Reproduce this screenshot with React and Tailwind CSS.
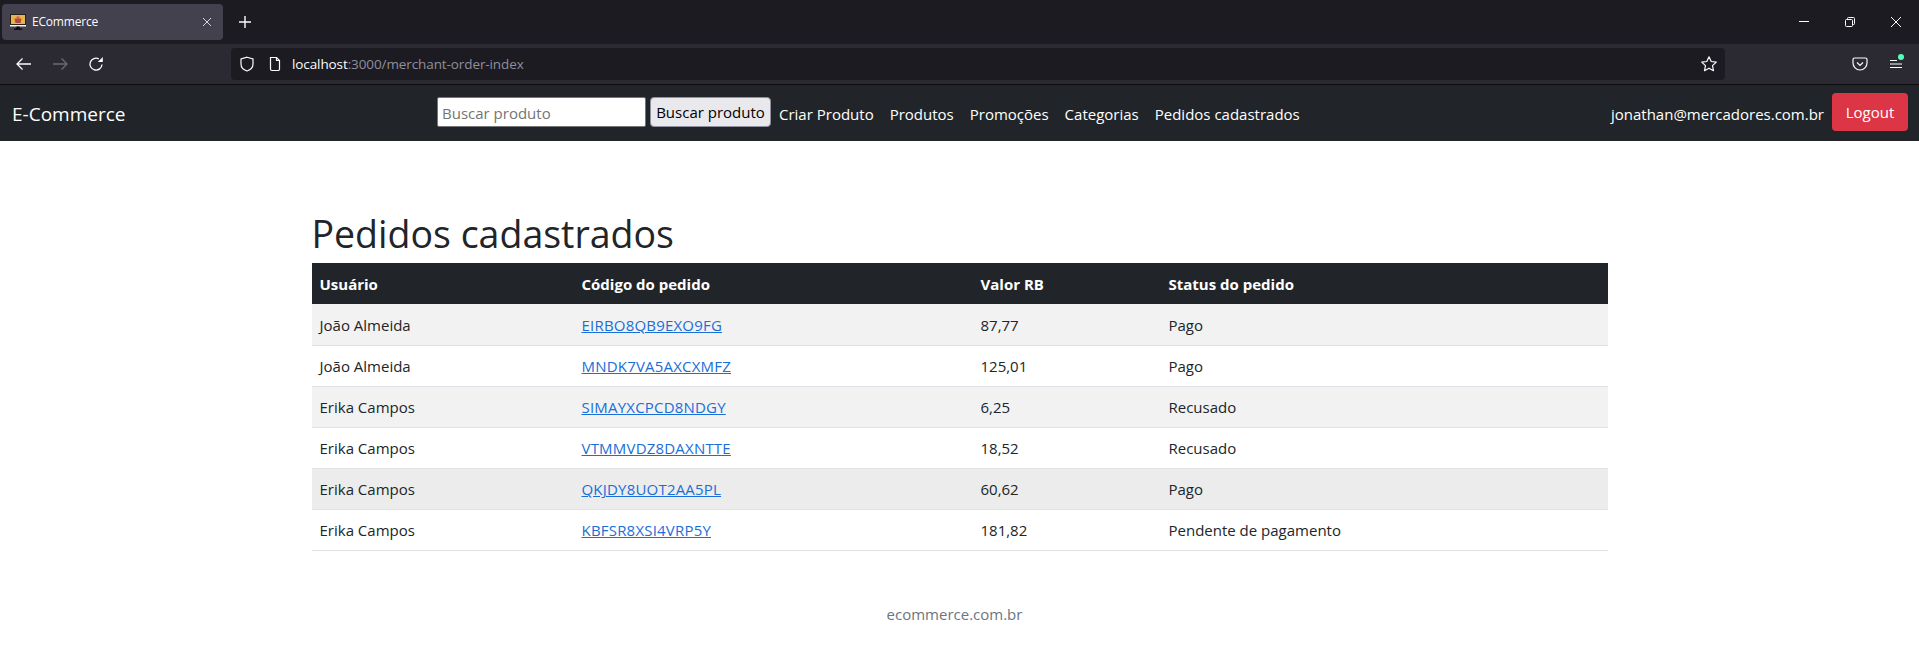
import React from "react";

function Arrow({ dim }) {
  return (
    <svg width="16" height="16" viewBox="0 0 16 16" fill="none" stroke={dim ? "#6b6b74" : "#fbfbfe"} strokeWidth="1.3">
      {dim ? <path d="M1 8H15M9.5 2.5L15 8L9.5 13.5" /> : <path d="M15 8H1M6.5 2.5L1 8L6.5 13.5" />}
    </svg>
  );
}

const rows = [
  ["João Almeida", "EIRBO8QB9EXO9FG", "87,77", "Pago", "bg-[#f2f2f2]"],
  ["João Almeida", "MNDK7VA5AXCXMFZ", "125,01", "Pago", "bg-white"],
  ["Erika Campos", "SIMAYXCPCD8NDGY", "6,25", "Recusado", "bg-[#f2f2f2]"],
  ["Erika Campos", "VTMMVDZ8DAXNTTE", "18,52", "Recusado", "bg-white"],
  ["Erika Campos", "QKJDY8UOT2AA5PL", "60,62", "Pago", "bg-[#ececec]"],
  ["Erika Campos", "KBFSR8XSI4VRP5Y", "181,82", "Pendente de pagamento", "bg-white"],
];

export default function App() {
  return (
    <div className="w-[1919px] h-[651px] overflow-hidden bg-white font-['Open_Sans',sans-serif] text-[#212529]">
      {/* Tab strip */}
      <div className="h-[44px] bg-[#1c1b22] flex items-start pt-[4px] pl-[2px] text-[#fbfbfe]">
        <div className="w-[221px] h-[36px] rounded-[4px] bg-[#42414d] flex items-center pl-[8px] pr-[10px]">
          <svg width="16" height="16" viewBox="0 0 16 16" className="shrink-0">
            <rect x="0.5" y="0.5" width="15" height="10" fill="#e9b44c" stroke="#2c2118" />
            <path d="M4.5 4.5H11.5L10.5 9H5.5Z" fill="#b5483f" />
            <rect x="6.5" y="2.5" width="3" height="2" fill="#c9605a" />
            <rect x="0" y="11" width="16" height="1.5" fill="#f5f5f5" />
            <path d="M6.5 12.5H9.5L10 14.5H12V16H4V14.5H6Z" fill="#111" />
          </svg>
          <span className="ml-[6px] text-[12px] flex-1 tracking-[-0.2px]">ECommerce</span>
          <svg width="12" height="12" viewBox="0 0 12 12" stroke="#d5d5da" strokeWidth="1"><path d="M2 2L10 10M10 2L2 10" /></svg>
        </div>
        <svg className="ml-[15px] mt-[11px]" width="14" height="14" viewBox="0 0 14 14" stroke="#fbfbfe" strokeWidth="1.4"><path d="M7 1V13M1 7H13" /></svg>
        <div className="ml-auto flex items-center h-[36px]">
          <div className="w-[46px] flex justify-center"><svg width="12" height="12" viewBox="0 0 12 12" stroke="#fbfbfe"><path d="M1 5.5H11" /></svg></div>
          <div className="w-[46px] flex justify-center"><svg width="12" height="12" viewBox="0 0 12 12" fill="none" stroke="#fbfbfe"><rect x="1.5" y="3.5" width="7" height="7" rx="1" /><path d="M3.5 3.5V2.5A1 1 0 0 1 4.5 1.5H9.5A1 1 0 0 1 10.5 2.5V7.5A1 1 0 0 1 9.5 8.5H8.5" /></svg></div>
          <div className="w-[46px] flex justify-center"><svg width="12" height="12" viewBox="0 0 12 12" stroke="#fbfbfe"><path d="M1 1L11 11M11 1L1 11" /></svg></div>
        </div>
      </div>
      {/* Toolbar */}
      <div className="h-[41px] bg-[#2b2a33] flex items-start pt-[4px] border-b border-b-[#0c0c0f]">
        <div className="w-[231px] h-[32px] flex items-center pl-[16px] gap-[20px] shrink-0">
          <Arrow />
          <Arrow dim />
          <svg width="16" height="16" viewBox="0 0 16 16" fill="none" stroke="#fbfbfe" strokeWidth="1.3">
            <path d="M14 8.5A6 6 0 1 1 10.8 2.8" />
            <path d="M14.8 1V6H9.8Z" fill="#fbfbfe" stroke="none" />
          </svg>
        </div>
        <div className="w-[1494px] h-[32px] rounded-[4px] bg-[#1c1b22] flex items-center pl-[8px] pr-[7px] shrink-0">
          <svg width="16" height="16" viewBox="0 0 16 16" fill="none" stroke="#fbfbfe" strokeWidth="1.2"><path d="M8 1.2L14 3V8C14 11.5 11 14 8 15C5 14 2 11.5 2 8V3Z" /></svg>
          <svg className="ml-[12px]" width="16" height="16" viewBox="0 0 16 16" fill="none" stroke="#fbfbfe" strokeWidth="1.2"><path d="M3.5 1.5H9.5L12.5 4.5V13A1.5 1.5 0 0 1 11 14.5H5A1.5 1.5 0 0 1 3.5 13Z" /><path d="M9.5 1.5V4.5H12.5" /></svg>
          <span className="ml-[9px] text-[13.5px] tracking-[-0.1px] text-[#fbfbfe]">localhost<span className="text-[#8f8f9d]">:3000/merchant-order-index</span></span>
          <svg className="ml-auto" width="18" height="18" viewBox="0 0 18 18" fill="none" stroke="#fbfbfe" strokeWidth="1.2"><path d="M9 1.8L11.2 6.5L16.3 7.1L12.5 10.6L13.5 15.7L9 13.2L4.5 15.7L5.5 10.6L1.7 7.1L6.8 6.5Z" strokeLinejoin="round" /></svg>
        </div>
        <div className="flex items-center h-[32px] ml-[127px]">
          <svg width="16" height="16" viewBox="0 0 16 16" fill="none" stroke="#fbfbfe" strokeWidth="1.2"><path d="M2.5 2H13.5A1.5 1.5 0 0 1 15 3.5V7A7 7 0 0 1 1 7V3.5A1.5 1.5 0 0 1 2.5 2Z" /><path d="M5 6.5L8 9.5L11 6.5" /></svg>
          <div className="relative ml-[21px]">
            <svg className="block" width="14" height="14" viewBox="0 0 14 14" stroke="#fbfbfe" strokeWidth="1.2"><path d="M1 3.5H8M1 7H13M1 10.5H13" /></svg>
            <div className="absolute -top-[3px] right-[-1px] w-[6px] h-[6px] rounded-full bg-[#54ffbd]" />
          </div>
        </div>
      </div>
      {/* Navbar */}
      <nav className="h-[56px] bg-[#212529] flex items-center text-white text-[15px] pl-[12px] pr-[11px] pb-[2px]">
        <span className="text-[19px] w-[425px] shrink-0 pt-[5px]">E-Commerce</span>
        <div className="flex items-center shrink-0">
          <input placeholder="Buscar produto" className="w-[209px] h-[30px] bg-white border border-[#767676] rounded-[2px] px-[4px] pt-[1px] text-[15px] text-black placeholder:text-[#757575]" />
          <button className="ml-[4px] h-[30px] w-[121px] pt-[1px] bg-[#e9e9ed] border border-[#8f8f9d] rounded-[4px] text-black text-[15px]">Buscar produto</button>
        </div>
        <div className="flex gap-[16px] ml-[8px] pt-[4px]">
          <span>Criar Produto</span>
          <span>Produtos</span>
          <span>Promoções</span>
          <span>Categorias</span>
          <span>Pedidos cadastrados</span>
        </div>
        <div className="ml-auto flex items-center gap-[8px]">
          <span className="pt-[4px]">jonathan@mercadores.com.br</span>
          <button className="bg-[#dc3545] text-white rounded-[4px] h-[38px] w-[76px] pt-[1px]">Logout</button>
        </div>
      </nav>
      {/* Content */}
      <main className="w-[1296px] mx-auto pt-[69px]">
        <h1 className="text-[37.5px] leading-[48px] font-normal mb-[5px]">Pedidos cadastrados</h1>
        <table className="w-full border-collapse text-[15px]">
          <thead>
            <tr className="bg-[#212529] text-white h-[41px]">
              <th className="text-left font-bold px-[8px] pt-[1px] w-[262px]">Usuário</th>
              <th className="text-left font-bold px-[8px] pt-[1px] w-[399px]">Código do pedido</th>
              <th className="text-left font-bold px-[8px] pt-[1px] w-[188px]">Valor RB</th>
              <th className="text-left font-bold px-[8px] pt-[1px]">Status do pedido</th>
            </tr>
          </thead>
          <tbody>
            {rows.map((r) => (
              <tr key={r[1]} className={`${r[4]} h-[41px] border-b border-b-[#dee2e6]`}>
                <td className="px-[8px] pt-[2px]">{r[0]}</td>
                <td className="px-[8px] pt-[2px]"><a href="#" className="underline tracking-[0.2px] text-[#1a6ed8]">{r[1]}</a></td>
                <td className="px-[8px] pt-[2px]">{r[2]}</td>
                <td className="px-[8px] pt-[2px]">{r[3]}</td>
              </tr>
            ))}
          </tbody>
        </table>
        <p className="text-center text-[#6c757d] mt-[52px] pr-[10px] text-[15px]">ecommerce.com.br</p>
      </main>
    </div>
  );
}
